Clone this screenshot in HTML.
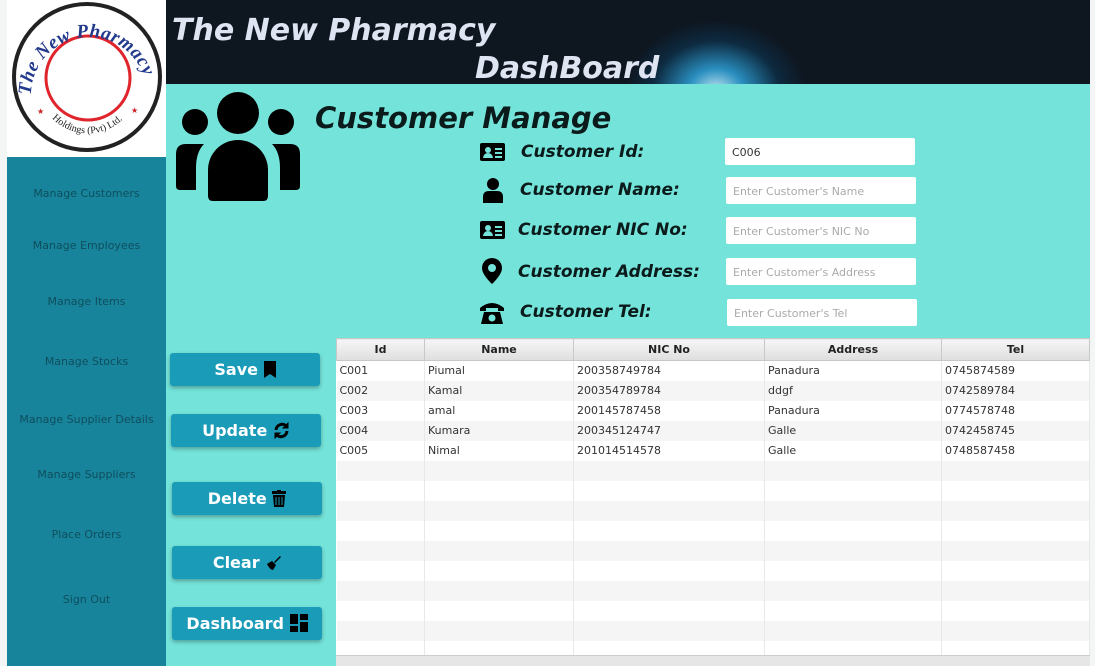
<!DOCTYPE html>
<html><head><meta charset="utf-8"><style>
*{margin:0;padding:0;box-sizing:border-box}
body{width:1095px;height:666px;overflow:hidden;background:#f4f6f6;font-family:"DejaVu Sans","Liberation Sans",sans-serif;position:relative}
.abs{position:absolute}
#side{left:7px;top:157px;width:159px;height:509px;background:#17849b}
#side div{position:absolute;width:159px;text-align:center;font-size:11px;color:#0f4e5e}
#logo{left:7px;top:0;width:159px;height:157px;background:#fff}
#head{left:166px;top:0;width:924px;height:84px;background:radial-gradient(ellipse 90px 70px at 550px 90px,#bfe4f0 0%,#2a8fc0 30%,#0d2a40 70%,transparent 100%),#0e1620}
#head .t{font-weight:bold;font-style:italic;color:#dfe4f2;font-size:30px;position:absolute}
#main{left:166px;top:84px;width:924px;height:582px;background:#74e4da}
.lbl{position:absolute;font-weight:bold;font-style:italic;font-size:17px;color:#0b1a1a}
.inp{position:absolute;width:190px;height:27px;background:#fff;border-radius:2px;font-size:11px;color:#aaa;padding:8px 7px}
.btn{position:absolute;width:150px;height:33px;background:#1a9bb8;border-radius:3px;box-shadow:0 2px 4px rgba(0,0,0,.3);color:#fff;font-weight:bold;font-size:16px;text-align:center;line-height:33px}
.btn svg{vertical-align:-3px}
table{position:absolute;left:336px;top:338px;width:754px;border-collapse:collapse;font-size:11px;color:#333;background:#fff}
th{height:22px;background:linear-gradient(#f6f6f6,#dedede);border:1px solid #c8c8c8;font-weight:bold;font-size:11px;color:#222}
td{height:20px;border-right:1px solid #e8e8e8;padding-left:3px}
tr:nth-child(odd) td{background:#f5f5f5}
</style></head><body>
<div class="abs" id="logo">
<svg width="159" height="157" viewBox="0 0 159 157"><defs><path id="arc" d="M24 95A58 58 0 1 1 140 95"/><path id="arc2" d="M40 112A50 50 0 0 0 122 112"/></defs>
<circle cx="80" cy="77" r="73" fill="none" stroke="#222" stroke-width="4"/><circle cx="81" cy="78" r="42" fill="none" stroke="#e0242c" stroke-width="3"/>
<text font-family="Liberation Serif" font-style="italic" font-weight="bold" font-size="19" fill="#233a8c" letter-spacing="0.5"><textPath href="#arc">The New Pharmacy</textPath></text>
<text font-family="Liberation Serif" font-size="10" fill="#222"><textPath href="#arc2" startOffset="8">Holdings (Pvt) Ltd.</textPath></text>
<text x="30" y="114" font-size="8" fill="#c22">★</text><text x="124" y="113" font-size="8" fill="#c22">★</text></svg></div>
<div class="abs" id="side">
<div style="top:30px">Manage Customers</div><div style="top:82px">Manage Employees</div><div style="top:138px">Manage Items</div><div style="top:198px">Manage Stocks</div><div style="top:256px">Manage Supplier Details</div><div style="top:311px">Manage Suppliers</div><div style="top:371px">Place Orders</div><div style="top:436px">Sign Out</div></div>
<div class="abs" id="head"><div class="t" style="left:6px;top:13px">The New Pharmacy</div><div class="t" style="left:309px;top:51px">DashBoard</div></div>
<div class="abs" id="main"></div>
<svg class="abs" style="left:174px;top:92px" width="128" height="110" viewBox="0 0 128 110"><circle cx="64" cy="21" r="21"/><circle cx="21" cy="30" r="13"/><circle cx="107" cy="30" r="13"/><path d="M34 104V78a30 30 0 0 1 60 0v26q0 5-5 5H39q-5 0-5-5z"/><path d="M2 94V62q0-10 10-10h18q-8 8-8 24v22H6q-4 0-4-4z"/><path d="M126 94V62q0-10-10-10H98q8 8 8 24v22h16q4 0 4-4z"/></svg>
<div class="lbl" style="left:315px;top:101px;font-size:29px">Customer Manage</div>
<svg class="abs" style="left:480px;top:143px" width="25" height="18"><rect width="25" height="18" rx="2"/><circle cx="8" cy="7" r="3" fill="#74e4da"/><path d="M3 15a5 5 0 0 1 10 0z" fill="#74e4da"/><rect x="15" y="5" width="7" height="2" fill="#74e4da"/><rect x="15" y="9" width="7" height="2" fill="#74e4da"/><rect x="15" y="13" width="7" height="2" fill="#74e4da"/></svg>
<div class="lbl" style="left:521px;top:142px">Customer Id:</div>
<svg class="abs" style="left:482px;top:177px" width="22" height="26"><circle cx="11" cy="7" r="6"/><path d="M1 26v-6q0-6 6-6h8q6 0 6 6v6z"/></svg>
<div class="lbl" style="left:520px;top:180px">Customer Name:</div>
<svg class="abs" style="left:480px;top:221px" width="25" height="18"><rect width="25" height="18" rx="2"/><circle cx="8" cy="7" r="3" fill="#74e4da"/><path d="M3 15a5 5 0 0 1 10 0z" fill="#74e4da"/><rect x="15" y="5" width="7" height="2" fill="#74e4da"/><rect x="15" y="9" width="7" height="2" fill="#74e4da"/><rect x="15" y="13" width="7" height="2" fill="#74e4da"/></svg>
<div class="lbl" style="left:518px;top:220px">Customer NIC No:</div>
<svg class="abs" style="left:482px;top:258px" width="20" height="26"><path d="M10 0a10 10 0 0 1 10 10c0 7-10 16-10 16S0 17 0 10A10 10 0 0 1 10 0z"/><circle cx="10" cy="10" r="4" fill="#74e4da"/></svg>
<div class="lbl" style="left:518px;top:262px">Customer Address:</div>
<svg class="abs" style="left:479px;top:299px" width="26" height="26"><path d="M1 9q12-10 24 0v3h-6v-3h-12v3h-6z"/><path d="M5 13h16l3 12H2z"/><circle cx="13" cy="19" r="3.5" fill="#74e4da"/></svg>
<div class="lbl" style="left:520px;top:302px">Customer Tel:</div>
<div class="inp" style="left:725px;top:138px;color:#333">C006</div>
<div class="inp" style="left:726px;top:177px">Enter Customer's Name</div>
<div class="inp" style="left:726px;top:217px">Enter Customer's NIC No</div>
<div class="inp" style="left:726px;top:258px">Enter Customer's Address</div>
<div class="inp" style="left:727px;top:299px">Enter Customer's Tel</div>
<div class="btn" style="left:170px;top:353px">Save <svg width="12" height="17"><path d="M0 0h12v17l-6-4-6 4z"/></svg></div>
<div class="btn" style="left:171px;top:414px">Update <svg width="17" height="17" viewBox="0 0 17 17" fill="none" stroke="#000" stroke-width="3"><path d="M3 8a6 6 0 0 1 11-3"/><path d="M14 9a6 6 0 0 1-11 3"/><path d="M15 1v5h-5z M2 16v-5h5z" fill="#000" stroke-width="1"/></svg></div>
<div class="btn" style="left:172px;top:482px">Delete <svg width="14" height="17"><rect x="0" y="1" width="14" height="3"/><rect x="5" y="0" width="4" height="2"/><path d="M1 5h12l-1 12H2z"/><path d="M4 7v8M7 7v8M10 7v8" stroke="#1a9bb8" stroke-width="1"/></svg></div>
<div class="btn" style="left:172px;top:546px">Clear <svg width="16" height="16"><path d="M9 7l6-6 1 1-6 6z"/><path d="M2 9l5-3 4 4-3 5q-3 0-6-6z"/></svg></div>
<div class="btn" style="left:172px;top:607px">Dashboard <svg width="18" height="18"><rect width="8" height="10"/><rect x="10" width="8" height="6"/><rect y="12" width="8" height="6"/><rect x="10" y="8" width="8" height="10"/></svg></div>
<table>
<tr><th style="width:88px">Id</th><th style="width:149px">Name</th><th style="width:191px">NIC No</th><th style="width:177px">Address</th><th>Tel</th></tr>
<tr><td>C001</td><td>Piumal</td><td>200358749784</td><td>Panadura</td><td>0745874589</td></tr>
<tr><td>C002</td><td>Kamal</td><td>200354789784</td><td>ddgf</td><td>0742589784</td></tr>
<tr><td>C003</td><td>amal</td><td>200145787458</td><td>Panadura</td><td>0774578748</td></tr>
<tr><td>C004</td><td>Kumara</td><td>200345124747</td><td>Galle</td><td>0742458745</td></tr>
<tr><td>C005</td><td>Nimal</td><td>201014514578</td><td>Galle</td><td>0748587458</td></tr>
<tr><td></td><td></td><td></td><td></td><td></td></tr><tr><td></td><td></td><td></td><td></td><td></td></tr><tr><td></td><td></td><td></td><td></td><td></td></tr><tr><td></td><td></td><td></td><td></td><td></td></tr><tr><td></td><td></td><td></td><td></td><td></td></tr><tr><td></td><td></td><td></td><td></td><td></td></tr><tr><td></td><td></td><td></td><td></td><td></td></tr><tr><td></td><td></td><td></td><td></td><td></td></tr><tr><td></td><td></td><td></td><td></td><td></td></tr><tr><td></td><td></td><td></td><td></td><td></td></tr>
</table>
<div class="abs" style="left:336px;top:655px;width:754px;height:11px;background:#e6e6e6;border-top:1px solid #ccc"></div>
</body></html>
